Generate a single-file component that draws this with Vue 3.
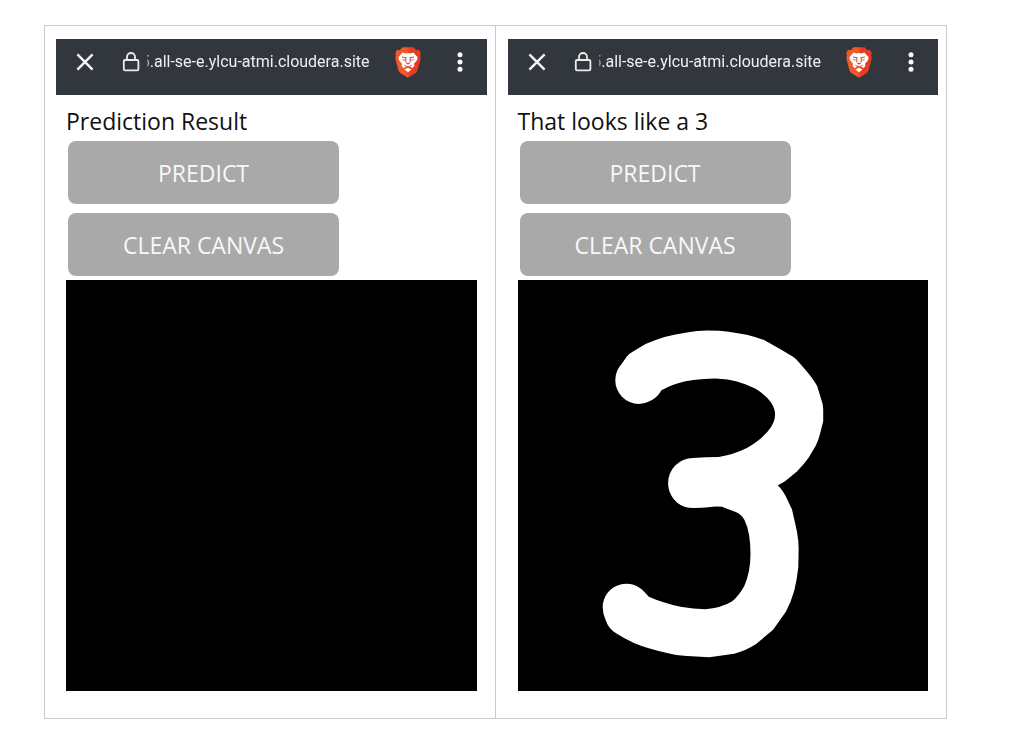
<script setup>
const screens = [
  { id: 'blank', message: 'Prediction Result', drawn: false },
  { id: 'three', message: 'That looks like a 3', drawn: true },
]
const address = '5.all-se-e.ylcu-atmi.cloudera.site'
</script>

<template>
  <main class="frame">
    <section v-for="s in screens" :key="s.id" class="cell">
      <header class="bar">
        <button class="icon close" type="button" aria-label="Close">
          <svg width="18" height="18" viewBox="0 0 18 18">
            <path d="M1.4 1.4 16.6 16.6M16.6 1.4 1.4 16.6" fill="none" stroke="#f7f7f7" stroke-width="2.4" />
          </svg>
        </button>
        <svg class="lock" width="18" height="20" viewBox="0 0 18 20" aria-hidden="true">
          <rect x="1.8" y="8" width="14.6" height="10.4" rx="1.2" fill="none" stroke="#ececec" stroke-width="1.8" />
          <path d="M5 8V5a4 4 0 0 1 8 0v3" fill="none" stroke="#ececec" stroke-width="1.8" />
        </svg>
        <span class="url"><span class="address">{{ address }}</span></span>
        <button class="icon shield" type="button" aria-label="Brave Shields">
          <svg width="28" height="32" viewBox="0 0 28 32">
            <defs>
              <linearGradient :id="'lion-' + s.id" x1="0" x2="1">
                <stop offset="0.45" stop-color="#f1592b" />
                <stop offset="0.6" stop-color="#e63a22" />
              </linearGradient>
            </defs>
            <path
              d="M8.4 1.2H19.6L22.4 4.2 24.8 3.8 26.8 7 26 9.4 26.8 12 23.6 24.2Q23 26 21.4 27.2L14 31.8 6.6 27.2Q5 26 4.4 24.2L1.2 12 2 9.4 1.2 7 3.2 3.8 5.6 4.2Z"
              :fill="`url(#lion-${s.id})`"
            />
            <path
              d="M8.6 6.6 11.5 7.4 14 7 16.5 7.4 19.4 6.6 23.6 11.2 23 14.2 20 17.8 20.4 20 18.4 22 15.6 20.6 14 20.2 12.4 20.6 9.6 22 7.6 20 8 17.8 5 14.2 4.4 11.2Z"
              fill="#fff"
            />
            <path
              d="M8 11 12 11.8 11.6 14.4 12.4 16.6M20 11 16 11.8 16.4 14.4 15.6 16.6"
              fill="none" stroke="#cf5338" stroke-width="1.1"
            />
            <path d="M7.4 13.4 10.8 13.4 10.4 14.8ZM20.6 13.4 17.2 13.4 17.6 14.8Z" fill="#cf4128" />
            <path d="M11.8 17H16.2L14 18.8Z" fill="#cf4128" />
            <path d="M10.4 19.2 14 21.2 17.6 19.2" fill="none" stroke="#df4629" stroke-width="1" />
            <path d="M14 21.8 17.6 23.6 14 26.2 10.4 23.6Z" fill="#fff" />
          </svg>
        </button>
        <button class="icon" type="button" aria-label="Menu">
          <svg width="8" height="22" viewBox="0 0 8 22">
            <g fill="#fafafa">
              <circle cx="4" cy="3.8" r="2.5" />
              <circle cx="4" cy="11" r="2.5" />
              <circle cx="4" cy="18.2" r="2.5" />
            </g>
          </svg>
        </button>
      </header>
      <div class="body">
        <p class="message">{{ s.message }}</p>
        <div class="actions">
          <button class="action" type="button">PREDICT</button>
          <button class="action" type="button">CLEAR CANVAS</button>
        </div>
        <svg class="pad" viewBox="-219 -90 1236 1236" role="img" aria-label="Drawing canvas">
          <path
            v-if="s.drawn"
            fill="#fff"
            d="M74 210Q75 182 93 163L108 141Q114 133 125 127L165 103Q190 92 222 82 250 74 285 69 325 62 350 62 390 62 415 66L470 75Q497 82 522 91L570 118 608 140Q618 146 628 159L652 187Q672 211 682 230L696 276Q700 287 700 300L700 335 688 382Q684 396 677 410L657 444Q642 466 620 487L585 516 563 529
               Q576 540 588 563L606 601Q615 640 621 668 626 695 626 720L625 775Q621 812 613 845 603 880 588 908L549 963 497 1007Q464 1028 432 1035L357 1046 290 1042Q255 1040 230 1033 170 1020 130 1003 98 988 75 973 54 960 46 937 36 915 36 895
               A71 71 0 0 1 155 843Q165 853 175 864 215 882 270 894 310 901 345 901 392 898 425 878 445 862 462 832 481 790 481 735 481 670 463 633 455 616 435 608L395 593Q375 591 355 594 325 597 295 596
               A75 75 0 0 1 233 523A75 75 0 0 1 308 446Q345 443 385 443 430 436 470 416 520 387 542 354 555 335 555 315 555 298 543 279 525 255 495 237 440 208 385 207 340 206 285 215 245 224 213 242
               A80 80 0 0 1 145 283A71 71 0 0 1 74 210Z"
          />
        </svg>
      </div>
    </section>
  </main>
</template>

<style>
body {
  background: #fff;
}
</style>

<style scoped>
.frame {
  display: grid;
  grid-template-columns: 1fr 1fr;
  margin: 25px 77px 12px 44px;
  border: 1px solid #c9c9c9;
  font-family: "Open Sans", "Noto Sans", sans-serif;
}
.cell {
  min-width: 0;
  padding: 13px 8px 27px 11px;
}
.cell:first-child {
  border-right: 1px solid #c9c9c9;
}
.cell + .cell {
  padding-left: 12px;
}
.bar {
  display: flex;
  align-items: center;
  box-sizing: border-box;
  height: 56px;
  padding: 0 23px 10px 20px;
  background: #32373e;
}
.icon {
  display: flex;
  flex: none;
  padding: 0;
  border: 0;
  background: none;
}
.close {
  margin-right: 28px;
}
.lock {
  flex: none;
  margin-right: 7px;
}
.url {
  display: flex;
  flex: 1;
  justify-content: flex-end;
  min-width: 0;
  overflow: hidden;
  color: #efefef;
  font: 16px/24px Roboto, sans-serif;
  mask-image: linear-gradient(to right, rgb(0 0 0 / 0.4), #000 4px);
}
.address {
  flex: none;
  white-space: nowrap;
}
.shield {
  margin: 0 34px 0 24px;
}
.body {
  padding: 10px 10px 0;
}
.message {
  margin: 0;
  color: #111;
  font-size: 23px;
  line-height: 32px;
}
.actions {
  display: flex;
  flex-direction: column;
  gap: 9px;
  padding: 4px 2px;
}
.action {
  width: 271px;
  max-width: 100%;
  height: 63px;
  padding: 0;
  border: 0;
  border-radius: 8px;
  background: #a9a9a9;
  color: #f8f8f8;
  font: 23px/32px "Open Sans", "Noto Sans", sans-serif;
}
.pad {
  display: block;
  width: 100%;
  background: #000;
}
</style>
